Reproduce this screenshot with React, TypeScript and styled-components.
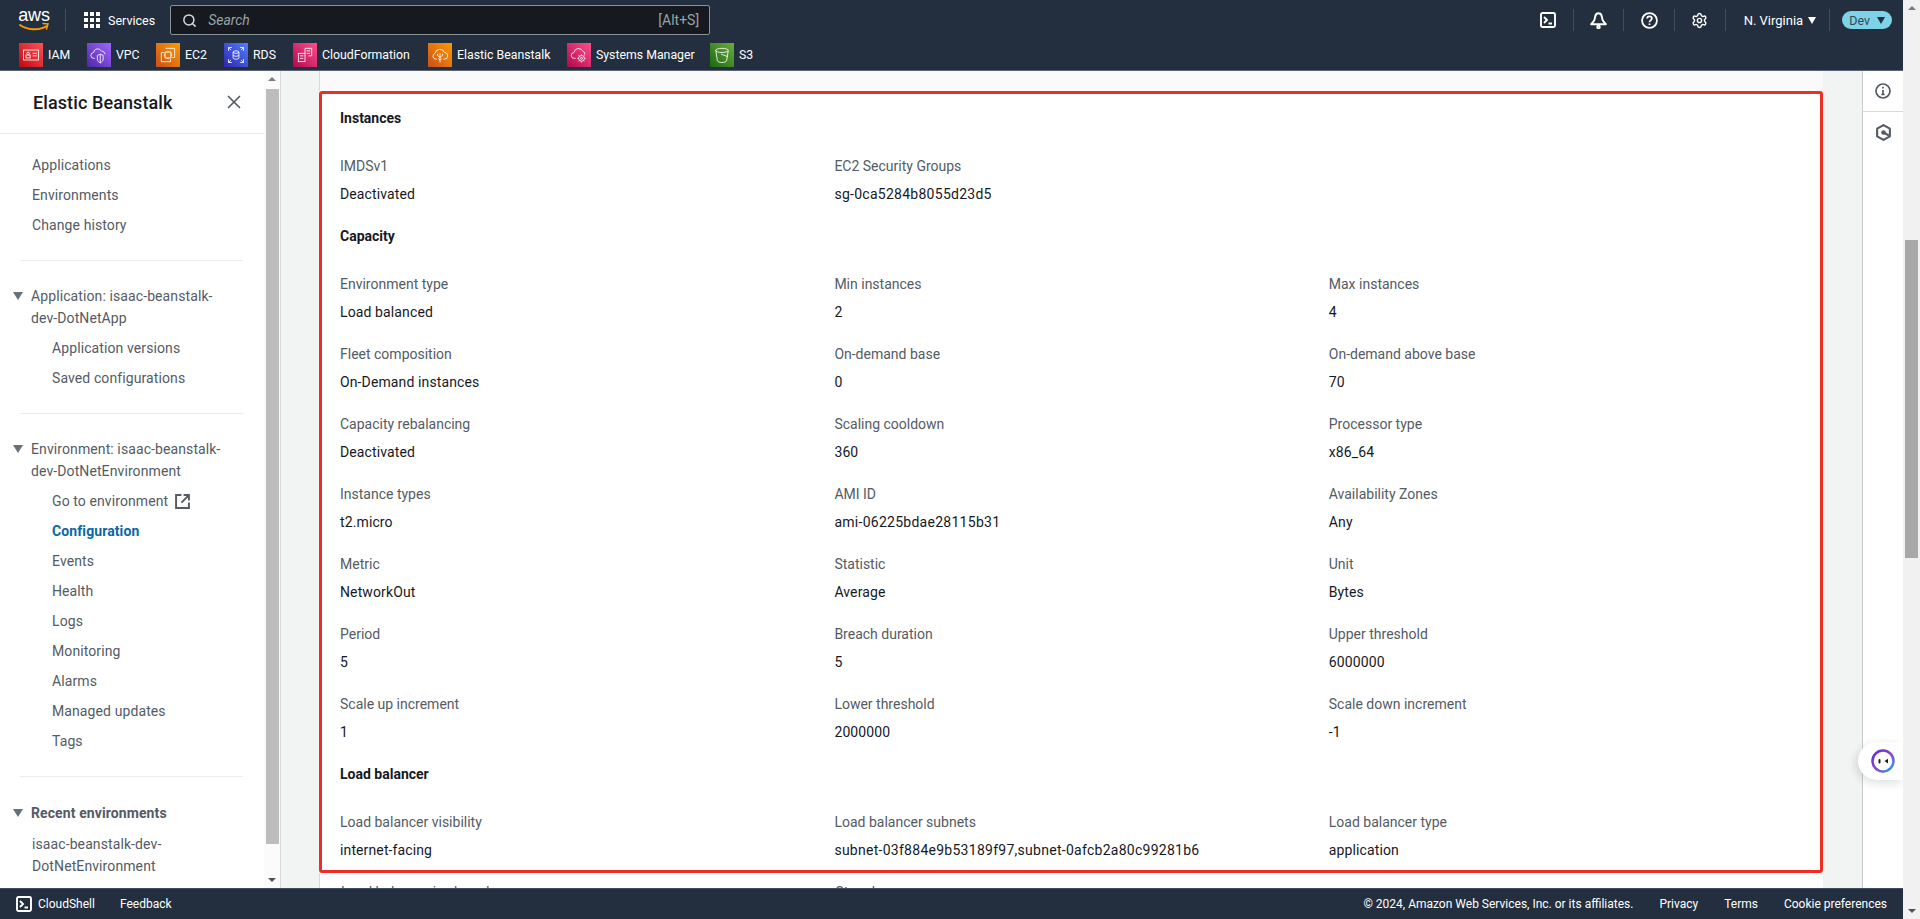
import React from 'react';
import styled, { createGlobalStyle } from 'styled-components';
import { Search, Settings, X } from 'lucide-react';

const GlobalStyle = createGlobalStyle`
  html, body { margin: 0; padding: 0; height: 100%; overflow: hidden; background: #fff; }
  body { font-family: Roboto, "Liberation Sans", sans-serif; font-size: 14px; color: #16191f; }
  * { box-sizing: border-box; }
`;

const Frame = styled.div`
  display: flex;
  width: 1920px;
  height: 919px;
  overflow: hidden;
`;

const Console = styled.div`
  flex: 1;
  min-width: 0;
  display: flex;
  flex-direction: column;
  position: relative;
`;

/* top navigation */
const TopNav = styled.header`
  flex: none;
  height: 71px;
  background: #232f3e;
  border-bottom: 1px solid #596575;
  color: #fff;
`;

const NavRow = styled.div`
  display: flex;
  align-items: center;
  height: 40px;
  padding-left: 18px;
`;

const LogoWrap = styled.div`
  position: relative;
  width: 32px;
  height: 28px;
  flex: none;
`;

const LogoText = styled.span`
  display: block;
  font-family: "Liberation Sans", sans-serif;
  font-size: 18px;
  line-height: 18px;
  letter-spacing: -0.2px;
  text-align: center;
`;

const LogoSmile = styled.svg`
  position: absolute;
  left: 0;
  top: 15px;
`;

const NavSep = styled.span<{ $offset?: number }>`
  flex: none;
  width: 1px;
  height: 22px;
  margin-left: ${p => p.$offset || 0}px;
  background: #414d5c;
`;

const ServicesBtn = styled.div`
  display: flex;
  align-items: center;
  gap: 8px;
  margin: 0 15px 0 18px;
  font-size: 12.5px;
`;

const SearchBox = styled.div`
  display: flex;
  align-items: center;
  width: 540px;
  height: 30px;
  padding: 0 10px 0 11px;
  background: #16191f;
  border: 1px solid #879596;
  border-radius: 2px;
`;

const SearchHint = styled.span`
  margin-left: 11px;
  font-size: 14px;
  font-style: italic;
  color: #95a5a6;
`;

const SearchKey = styled.span`
  margin-left: auto;
  font-size: 14px;
  color: #95a5a6;
`;

const NavRight = styled.div`
  display: flex;
  align-items: center;
  margin-left: auto;
  padding-right: 11px;
`;

const NavIconCell = styled.span`
  display: flex;
  align-items: center;
  justify-content: center;
  width: 49.6px;
`;

const RegionMenu = styled.span`
  display: flex;
  align-items: center;
  gap: 5px;
  padding: 0 13px 0 18px;
  font-size: 13px;
`;

const Caret = styled.span<{ $color?: string }>`
  width: 0;
  height: 0;
  border-left: 4.5px solid transparent;
  border-right: 4.5px solid transparent;
  border-top: 7px solid ${p => p.$color || '#fff'};
`;

const EnvPill = styled.span`
  display: flex;
  align-items: center;
  gap: 7px;
  height: 18px;
  margin-left: 12px;
  padding: 0 7px 0 7px;
  border-radius: 9px;
  background: #7dd3e8;
  color: #37475a;
  font-size: 12.5px;
`;

const ShortcutRow = styled.div`
  display: flex;
  align-items: center;
  height: 30px;
  padding-left: 19px;
`;

const Shortcut = styled.div<{ $width: number }>`
  display: flex;
  align-items: center;
  gap: 5px;
  width: ${p => p.$width}px;
  font-size: 12.3px;
  white-space: nowrap;
`;

const ServiceTile = styled.span<{ $from: string; $to: string }>`
  flex: none;
  display: flex;
  align-items: center;
  justify-content: center;
  width: 24px;
  height: 24px;
  background: linear-gradient(45deg, ${p => p.$from}, ${p => p.$to});
`;

/* body */
const Body = styled.div`
  flex: 1;
  min-height: 0;
  display: flex;
`;

const SideNav = styled.nav`
  flex: none;
  width: 264px;
  overflow: hidden;
  background: #fff;
  color: #545b64;
  letter-spacing: 0.1px;
`;

const SideHeader = styled.div`
  display: flex;
  align-items: center;
  justify-content: space-between;
  height: 63px;
  padding: 0 19px 0 33px;
  border-bottom: 1px solid #eaeded;
  color: #16191f;
  font-size: 18px;
  font-weight: 500;
`;

const SideList = styled.div`
  padding-top: 16px;
`;

const SideItem = styled.div<{ $child?: boolean; $active?: boolean }>`
  height: 30px;
  line-height: 30px;
  padding-left: ${p => (p.$child ? 52 : 32)}px;
  display: flex;
  align-items: center;
  gap: 7px;
  color: ${p => (p.$active ? '#0b67a3' : 'inherit')};
  font-weight: ${p => (p.$active ? 700 : 400)};
`;

const SideDivider = styled.div`
  height: 1px;
  margin: 20px 21px 24px 20px;
  background: #eaeded;
`;

const GroupHead = styled.div<{ $bold?: boolean }>`
  display: flex;
  padding-left: 13px;
  padding-top: ${p => (p.$bold ? 1 : 0)}px;
  margin-bottom: 4px;
  line-height: 22px;
  font-weight: ${p => (p.$bold ? 700 : 400)};
`;

const GroupCaret = styled.span`
  flex: none;
  width: 0;
  height: 0;
  margin: 7px 8px 0 0;
  border-left: 5px solid transparent;
  border-right: 5px solid transparent;
  border-top: 8px solid #687078;
`;

const GroupTitle = styled.span`
  max-width: 200px;
`;

const RecentLink = styled.div`
  margin-top: 9px;
  padding-left: 32px;
  max-width: 180px;
  line-height: 22px;
`;

const Scrollbar = styled.div<{ $width: number; $track: string }>`
  flex: none;
  display: flex;
  flex-direction: column;
  align-items: center;
  width: ${p => p.$width}px;
  background: ${p => p.$track};
`;

const ScrollUp = styled.span`
  flex: none;
  margin-top: 6px;
  width: 0;
  height: 0;
  border-left: 4px solid transparent;
  border-right: 4px solid transparent;
  border-bottom: 4px solid #7b7b7b;
`;

const ScrollDown = styled.span`
  flex: none;
  margin-top: auto;
  margin-bottom: 6px;
  width: 0;
  height: 0;
  border-left: 4px solid transparent;
  border-right: 4px solid transparent;
  border-top: 4px solid #505050;
`;

const ScrollThumb = styled.span<{ $top: number; $height: number; $color: string }>`
  flex: none;
  width: 13px;
  margin-top: ${p => p.$top}px;
  height: ${p => p.$height}px;
  background: ${p => p.$color};
`;

const NavScrollWrap = styled.div`
  display: flex;
  flex: none;
  border-right: 1px solid #d5dbdb;
`;

const Main = styled.main`
  flex: 1;
  min-width: 0;
  display: flex;
  background: #f2f3f3;
  padding-left: 38px;
  overflow: hidden;
`;

const Panel = styled.div`
  width: 1504px;
  background: #fff;
  overflow: hidden;
`;

const PanelTop = styled.div`
  height: 20px;
  background: #fafafa;
  border-left: 1px solid #d5dbdb;
`;

const Highlight = styled.div`
  padding: 14px 0 10px 18px;
  border: 3px solid #ee2d24;
  border-radius: 3px;
`;

const SectionTitle = styled.div`
  height: 20px;
  line-height: 20px;
  margin-bottom: 28px;
  font-weight: 700;
`;

const FieldGrid = styled.div`
  display: grid;
  grid-template-columns: repeat(3, 494.4px);
  row-gap: 22px;
  margin-bottom: 22px;

  &:last-child {
    margin-bottom: 0;
  }
`;

const Field = styled.div`
  min-width: 0;
`;

const FieldLabel = styled.div`
  height: 20px;
  line-height: 20px;
  margin-bottom: 8px;
  color: #545b64;
`;

const FieldValue = styled.div<{ $id: boolean }>`
  height: 20px;
  line-height: 20px;
  letter-spacing: ${p => (p.$id ? 0.27 : 0.12)}px;
`;

const BelowFold = styled(FieldGrid)`
  padding: 9px 0 0 21px;
  border-left: 1px solid #d5dbdb;
`;

const Gutter = styled.div`
  flex: none;
  width: 39px;
`;

const ToolRail = styled.aside`
  flex: none;
  position: relative;
  width: 41px;
  background: #fff;
  border-left: 1px solid #c6cdcd;
`;

const RailButton = styled.div<{ $divided?: boolean }>`
  display: flex;
  align-items: center;
  justify-content: center;
  height: 41px;
  border-bottom: ${p => (p.$divided ? '1px solid #d5dbdb' : 'none')};
`;

const QBubble = styled.div`
  position: absolute;
  right: 0;
  top: 671px;
  display: flex;
  align-items: center;
  justify-content: flex-end;
  width: 45px;
  height: 38px;
  padding-right: 8px;
  background: #fff;
  border-radius: 19px 0 0 19px;
  box-shadow: -2px 3px 10px rgba(0, 28, 36, 0.14);
`;

/* footer */
const Footer = styled.footer`
  flex: none;
  display: flex;
  align-items: center;
  height: 31px;
  padding: 0 16px;
  background: #232f3e;
  border-top: 1px solid #414d5c;
  color: #fff;
  font-size: 12px;
`;

const ShellLink = styled.span`
  display: flex;
  align-items: center;
  gap: 6px;
  margin-right: 25px;
`;

const FooterRight = styled.div`
  display: flex;
  gap: 26px;
  margin-left: auto;
`;

function TerminalIcon() {
  return (
    <svg width="16" height="16" viewBox="0 0 16 16" fill="none" stroke="#fff" strokeWidth="1.9">
      <rect x="1" y="1" width="14" height="14" rx="1.5" />
      <path d="M4 5l3 3-3 3M8.500 11.500H12" />
    </svg>
  );
}

function BellIcon() {
  return (
    <svg width="17" height="17" viewBox="0 0 16 16" fill="none" stroke="#fff" strokeWidth="1.8" strokeLinejoin="round">
      <path d="M8 1.200c-1.800 0-2.900 1.500-3.200 3.400-.2 1.700-.7 3.500-1.400 4.300L1.100 11.500h13.800l-2.300-2.600c-.7-.8-1.200-2.600-1.400-4.300C10.900 2.700 9.800 1.200 8 1.200z" />
      <circle cx="8" cy="14" r="1.200" />
    </svg>
  );
}

function HelpIcon() {
  return (
    <svg width="17" height="17" viewBox="0 0 16 16" fill="none" stroke="#fff" strokeWidth="1.7">
      <circle cx="8" cy="8" r="7" />
      <path d="M5.800 6.200c0-1.300 1-2.100 2.200-2.100s2.200.8 2.200 2c0 1.800-2.200 1.700-2.200 3.500" />
      <path d="M8 10.800v1.500" />
    </svg>
  );
}

function InfoIcon() {
  return (
    <svg width="16" height="16" viewBox="0 0 16 16" fill="none" stroke="#545b64" strokeWidth="1.7">
      <circle cx="8" cy="8" r="7" />
      <path d="M8 7v4.500M6.300 11.500h3.400M8 3.800v1.700" />
    </svg>
  );
}

function HexIcon() {
  return (
    <svg width="17" height="17" viewBox="0 0 16 16" fill="none" stroke="#545b64" strokeWidth="2" strokeLinejoin="round">
      <path d="M8 1l6 3.400v7.200L8 15l-6-3.400V4.400z" />
      <path d="M8 8l5 2.800" />
      <circle cx="8" cy="8" r="2.200" fill="#545b64" stroke="none" />
    </svg>
  );
}

function QIcon() {
  return (
    <svg width="24" height="24" viewBox="0 0 24 24">
      <defs>
        <linearGradient id="q-ring" x1="0" y1="0" x2="1" y2="1">
          <stop offset="0" stopColor="#5b2ee0" />
          <stop offset="0.5" stopColor="#8a3fd1" />
          <stop offset="1" stopColor="#1fa9e8" />
        </linearGradient>
      </defs>
      <circle cx="12" cy="12" r="10.500" fill="#fff" stroke="url(#q-ring)" strokeWidth="2.500" />
      <rect x="7.500" y="10" width="2" height="4.500" rx="1" fill="#16191f" />
      <path d="M17 9.800l-3.500 2.300 3.500 2.300z" fill="#16191f" />
    </svg>
  );
}

function GridIcon() {
  return (
    <svg width="16" height="16" viewBox="0 0 16 16" fill="#fff">
      {[0, 6, 12].map(y => [0, 6, 12].map(x => <rect key={`${x}-${y}`} x={x} y={y} width="4" height="4" />))}
    </svg>
  );
}

const tileStroke = { fill: 'none', stroke: '#fff', strokeWidth: 1 } as const;

const tiles: { label: string; width: number; from: string; to: string; art: React.ReactNode }[] = [
  {
    label: 'IAM', width: 68, from: '#bd0816', to: '#ff5252',
    art: <><rect x="3" y="6" width="18" height="12" /><circle cx="8.500" cy="10" r="1.500" /><rect x="6" y="12" width="5" height="3.500" /><path d="M14 10h5M14 13h5" /></>,
  },
  {
    label: 'VPC', width: 69, from: '#4d27a8', to: '#a166ff',
    art: <><path d="M7 16H6a3.500 3.500 0 0 1-.5-7A5 5 0 0 1 15 7.500 3.500 3.500 0 0 1 19 11" /><path d="M10 12.500l3.500-1.500 3.500 1.500v4c0 2.500-1.500 4-3.500 5-2-1-3.500-2.500-3.500-5z" /><path d="M13.500 11v10.500" /></>,
  },
  {
    label: 'EC2', width: 68, from: '#c8511b', to: '#ff9900',
    art: <><path d="M9 4h11v11h-3M7 9H4v11h11v-3" /><rect x="8.500" y="8.500" width="7" height="7" /><path d="M7 11h1.500M7 13h1.500M15.500 11H17M15.500 13H17M11 7v1.500M13 7v1.500M11 15.500V17M13 15.500V17" /></>,
  },
  {
    label: 'RDS', width: 69, from: '#2e27ad', to: '#527fff',
    art: <><ellipse cx="12" cy="8.500" rx="3.500" ry="1.500" /><path d="M8.500 8.500v7c0 .8 1.600 1.500 3.500 1.500s3.500-.7 3.500-1.500v-7M8.500 12c0 .8 1.600 1.500 3.500 1.500s3.500-.7 3.500-1.500" /><path d="M3 7V3h4M17 3h4v4M21 17v4h-4M7 21H3v-4M3 3l3 3M21 3l-3 3M21 21l-3-3M3 21l3-3" /></>,
  },
  {
    label: 'CloudFormation', width: 135, from: '#b0084d', to: '#ff4f8b',
    art: <><path d="M12 10V4h8v9h-4" /><path d="M14 7h4M14 10h4" /><rect x="4" y="10" width="8" height="10" /><path d="M6 13h4M6 16h4" /></>,
  },
  {
    label: 'Elastic Beanstalk', width: 139, from: '#c8511b', to: '#ff9900',
    art: <><path d="M8 17H7a3.500 3.500 0 0 1-1-6.800A6 6 0 0 1 17.500 9 4 4 0 0 1 17 17h-1" /><path d="M12 21V10M12 15l-3-2.500v-2M12 15l3-2.500v-2M12 18l-2-1.500M12 18l2-1.500" /></>,
  },
  {
    label: 'Systems Manager', width: 143, from: '#b0084d', to: '#ff4f8b',
    art: <><path d="M8 16H6.500a3.500 3.500 0 0 1-.5-7A5.500 5.500 0 0 1 16.500 7.500a3.500 3.500 0 0 1 2.500 4" /><circle cx="15" cy="16" r="3.500" /><circle cx="15" cy="16" r="1.200" /><path d="M15 11v1.500M15 19.500V21M10 16h1.500M18.500 16H20M11.500 12.500l1 1M17.500 18.500l1 1M18.500 12.500l-1 1M12.500 18.500l-1 1" /></>,
  },
  {
    label: 'S3', width: 40, from: '#1b660f', to: '#6cae3e',
    art: <><ellipse cx="12" cy="6.500" rx="7.500" ry="2.500" /><path d="M4.500 6.500L6.500 19c.3 1 2.800 2 5.500 2s5.200-1 5.500-2l2-12.500" /><path d="M11 11l8 3" /></>,
  },
];

type Row = [string, string];

const sections: { title: string; fields: Row[] }[] = [
  {
    title: 'Instances',
    fields: [
      ['IMDSv1', 'Deactivated'],
      ['EC2 Security Groups', 'sg-0ca5284b8055d23d5'],
    ],
  },
  {
    title: 'Capacity',
    fields: [
      ['Environment type', 'Load balanced'],
      ['Min instances', '2'],
      ['Max instances', '4'],
      ['Fleet composition', 'On-Demand instances'],
      ['On-demand base', '0'],
      ['On-demand above base', '70'],
      ['Capacity rebalancing', 'Deactivated'],
      ['Scaling cooldown', '360'],
      ['Processor type', 'x86_64'],
      ['Instance types', 't2.micro'],
      ['AMI ID', 'ami-06225bdae28115b31'],
      ['Availability Zones', 'Any'],
      ['Metric', 'NetworkOut'],
      ['Statistic', 'Average'],
      ['Unit', 'Bytes'],
      ['Period', '5'],
      ['Breach duration', '5'],
      ['Upper threshold', '6000000'],
      ['Scale up increment', '1'],
      ['Lower threshold', '2000000'],
      ['Scale down increment', '-1'],
    ],
  },
  {
    title: 'Load balancer',
    fields: [
      ['Load balancer visibility', 'internet-facing'],
      ['Load balancer subnets', 'subnet-03f884e9b53189f97,subnet-0afcb2a80c99281b6'],
      ['Load balancer type', 'application'],
    ],
  },
];

const envLinks = ['Events', 'Health', 'Logs', 'Monitoring', 'Alarms', 'Managed updates', 'Tags'];

export default function App() {
  return (
    <>
      <GlobalStyle />
      <Frame>
        <Console>
          <TopNav>
            <NavRow>
              <LogoWrap>
                <LogoText>aws</LogoText>
                <LogoSmile width="32" height="12" viewBox="0 0 32 12" fill="none" stroke="#ff9900" strokeWidth="2" strokeLinecap="round">
                  <path d="M2 4c7 5 19 6 27 1" />
                  <path d="M25 2.500l5 .5-1.500 5" strokeWidth="1.500" />
                </LogoSmile>
              </LogoWrap>
              <NavSep $offset={15} />
              <ServicesBtn>
                <GridIcon />
                Services
              </ServicesBtn>
              <SearchBox>
                <Search size={15} color="#d5dbdb" strokeWidth={2.4} />
                <SearchHint>Search</SearchHint>
                <SearchKey>[Alt+S]</SearchKey>
              </SearchBox>
              <NavRight>
                <NavIconCell><TerminalIcon /></NavIconCell>
                <NavSep />
                <NavIconCell><BellIcon /></NavIconCell>
                <NavSep />
                <NavIconCell><HelpIcon /></NavIconCell>
                <NavSep />
                <NavIconCell><Settings size={17} color="#fff" strokeWidth={2} /></NavIconCell>
                <NavSep />
                <RegionMenu>N. Virginia <Caret /></RegionMenu>
                <NavSep />
                <EnvPill>Dev <Caret $color="#232f3e" /></EnvPill>
              </NavRight>
            </NavRow>
            <ShortcutRow>
              {tiles.map(t => (
                <Shortcut key={t.label} $width={t.width}>
                  <ServiceTile $from={t.from} $to={t.to}>
                    <svg width="20" height="20" viewBox="0 0 24 24" {...tileStroke}>{t.art}</svg>
                  </ServiceTile>
                  {t.label}
                </Shortcut>
              ))}
            </ShortcutRow>
          </TopNav>
          <Body>
            <SideNav>
              <SideHeader>
                Elastic Beanstalk
                <X size={22} color="#545b64" strokeWidth={1.8} />
              </SideHeader>
              <SideList>
                <SideItem>Applications</SideItem>
                <SideItem>Environments</SideItem>
                <SideItem>Change history</SideItem>
                <SideDivider />
                <GroupHead>
                  <GroupCaret />
                  <GroupTitle>Application: isaac-beanstalk-dev-DotNetApp</GroupTitle>
                </GroupHead>
                <SideItem $child>Application versions</SideItem>
                <SideItem $child>Saved configurations</SideItem>
                <SideDivider />
                <GroupHead>
                  <GroupCaret />
                  <GroupTitle>Environment: isaac-beanstalk-dev-DotNetEnvironment</GroupTitle>
                </GroupHead>
                <SideItem $child>
                  Go to environment
                  <svg width="15" height="15" viewBox="0 0 14 14" fill="none" stroke="#545b64" strokeWidth="1.800">
                    <path d="M6 1H1v12h12V8M8 1h5v5M13 1L6 8" />
                  </svg>
                </SideItem>
                <SideItem $child $active>Configuration</SideItem>
                {envLinks.map(l => <SideItem $child key={l}>{l}</SideItem>)}
                <SideDivider />
                <GroupHead $bold>
                  <GroupCaret />
                  <GroupTitle>Recent environments</GroupTitle>
                </GroupHead>
                <RecentLink>isaac-beanstalk-dev-DotNetEnvironment</RecentLink>
              </SideList>
            </SideNav>
            <NavScrollWrap>
              <Scrollbar $width={16} $track="#fbfbfb">
                <ScrollUp />
                <ScrollThumb $top={8} $height={755} $color="#bdbdbd" />
                <ScrollDown />
              </Scrollbar>
            </NavScrollWrap>
            <Main>
              <Panel>
                <PanelTop />
                <Highlight>
                  {sections.map(s => (
                    <React.Fragment key={s.title}>
                      <SectionTitle>{s.title}</SectionTitle>
                      <FieldGrid>
                        {s.fields.map(([label, value]) => (
                          <Field key={label}>
                            <FieldLabel>{label}</FieldLabel>
                            <FieldValue $id={/\d{4}/.test(value) && value.includes('-')}>{value}</FieldValue>
                          </Field>
                        ))}
                      </FieldGrid>
                    </React.Fragment>
                  ))}
                </Highlight>
                <BelowFold>
                  <FieldLabel>Load balancer is shared</FieldLabel>
                  <FieldLabel>Store logs</FieldLabel>
                </BelowFold>
              </Panel>
              <Gutter />
              <ToolRail>
                <RailButton $divided><InfoIcon /></RailButton>
                <RailButton><HexIcon /></RailButton>
                <QBubble><QIcon /></QBubble>
              </ToolRail>
            </Main>
          </Body>
          <Footer>
            <ShellLink><TerminalIcon />CloudShell</ShellLink>
            <span>Feedback</span>
            <FooterRight>
              <span>© 2024, Amazon Web Services, Inc. or its affiliates.</span>
              <span>Privacy</span>
              <span>Terms</span>
              <span>Cookie preferences</span>
            </FooterRight>
          </Footer>
        </Console>
        <Scrollbar $width={17} $track="#f1f1f1">
          <ScrollUp />
          <ScrollThumb $top={230} $height={318} $color="#a8a8a8" />
          <ScrollDown />
        </Scrollbar>
      </Frame>
    </>
  );
}
